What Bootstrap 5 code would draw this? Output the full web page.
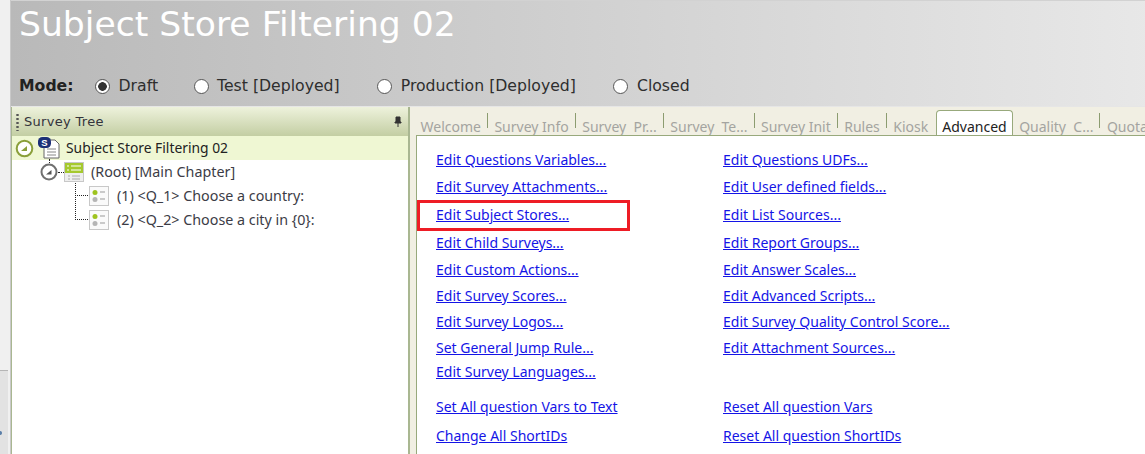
<!DOCTYPE html>
<html lang="en">
<head>
    <meta charset="UTF-8">
    <meta name="viewport" content="width=device-width, initial-scale=1.0">
    <title>Subject Store Filtering 02</title>
    <link rel="stylesheet" href="https://cdn.jsdelivr.net/npm/bootstrap@5.3.0/dist/css/bootstrap.min.css">
    <style>
        html, body { height: 100%; }
        body { width: 1145px; height: 454px; overflow: hidden; background: #f0f0f0; font-family: "Noto Sans", "Liberation Sans", sans-serif; color: #3c3c46; }
        .edge-strip { width: 10px; }
        .edge-low { height: 84px; background: radial-gradient(circle at 0 62px, #5b7fa8 1.5px, #e2e2e2 2.5px); border-top: 1px solid #b5b5b5; margin-right: 2px; }
        .app-shell { height: 454px; border-left: 1px solid #c9c9c9; }
        .head-band { height: 107px; background: linear-gradient(90deg, #b9b9b9, #e8e8e8); border-top: 1px solid #d2d2d2; border-bottom: 1px solid #e6e6e6; }
        .head-title { font-family: "DejaVu Sans", sans-serif; font-size: 34.6px; line-height: 46px; color: #fff; padding: 0 0 0 8px; margin: 0; font-weight: 400; }
        .mode-row { height: 30px; margin-top: 24px; padding-left: 8px; font-family: "DejaVu Sans", sans-serif; font-size: 15.7px; color: #2e2e2e; }
        .mode-label { font-weight: 700; width: 76px; color: #222; }
        .mode-opt { width: 15px; height: 15px; margin: 0 8.5px 0 0; border: 1px solid #555; background: #fff; flex: none; }
        .mode-opt:checked { background: radial-gradient(circle, #333 0 4px, #fff 4.6px); border-color: #555; }
        .mode-opt:focus { box-shadow: none; }
        .mode-text { margin-right: 37.5px; }
        .mode-first { margin-right: 35.5px; }
        .tree-pane { width: 399px; border-right: 2px solid #a9b791; border-left: 1px solid #a9b791; background: #fff; }
        .tree-head { height: 29px; background: linear-gradient(#eef2dc, #c3cea3); font-family: "DejaVu Sans", sans-serif; font-size: 13px; letter-spacing: .3px; color: #33333b; padding: 0 5px 0 4px; }
        .grip { width: 3px; height: 18px; margin-right: 5px; background: radial-gradient(circle, #555 1px, transparent 1.4px) 0 0 / 3px 4px; }
        .tree-row { height: 24px; font-size: 14.3px; white-space: nowrap; position: relative; }
        .tree-top { background: #eff7d3; color: #222; padding-left: 3px; font-size: 13.85px; }
        .tree-l1 { padding-left: 28px; }
        .tree-l1::before { content: ""; position: absolute; left: 37px; top: -1px; height: 4px; border-left: 1px dotted #222; }
        .tree-l2 { padding-left: 77px; }
        .tree-l2::before { content: ""; position: absolute; left: 63px; bottom: 12px; width: 13px; border-left: 1px dotted #222; border-bottom: 1px dotted #222; }
        .tree-q1::before { height: 13px; }
        .tree-q2::before { height: 37px; }
        .tree-l1 .hook { width: 6px; border-top: 1px dotted #222; flex: none; }
        .tree-lab { margin-left: 7px; }
        .tree-l2 .tree-lab { margin-left: 8px; }
        .tree-top .tree-lab { margin-left: 6px; }
        .side-pane { background: #f1efe3; }
        .tab-strip { height: 29px; border-bottom: 1px solid #98a97c; font-size: 14px; flex-wrap: nowrap; overflow: hidden; margin-left: 6px; align-items: flex-end; }
        .tab-item { height: 25px; padding: 8px 7px 0 6.5px; line-height: 18px; color: #a4a4a0; white-space: nowrap; position: relative; flex: none; }
        .tab-item:first-child { margin-left: -2px; }
        .tab-item::after { content: ""; position: absolute; right: 0; top: 3px; height: 15px; border-right: 1px solid #8c9c70; }
        .tab-active { background: #fff; color: #222; border: 1px solid #98a97c; border-bottom: 0; border-radius: 4px 4px 0 0; height: 26px; padding: 7px 5px 0; margin: 0 0 0 1px; position: relative; top: 1px; }
        .tab-plain::after, .tab-active::after { display: none; }
        .link-panel { position: relative; margin-left: 6px; background: #fff; border-left: 1px solid #98a97c; height: 320px; padding: 12px 0 0 19px; display: grid; grid-template-columns: 287px 1fr; grid-template-rows: 27px 28px 28px 27px 26px 26px 26px 24px 35px 29px 24px; font-size: 14px; }
        .link-panel a { color: #1414e6; white-space: nowrap; line-height: 24px; }
        .mark-box { position: absolute; left: 0; top: 64px; width: 213px; height: 31px; border: 3px solid #ee1c25; }
    </style>
</head>
<body class="d-flex">
    <div class="edge-strip d-flex flex-column justify-content-end flex-shrink-0"><div class="edge-low"></div></div>
    <div class="app-shell d-flex flex-column flex-grow-1">
        <!-- title band -->
        <header class="head-band flex-shrink-0">
            <h1 class="head-title">Subject Store Filtering 02</h1>
            <div class="mode-row d-flex align-items-center">
                <span class="mode-label">Mode:</span>
                <input class="form-check-input mode-opt" type="radio" name="mode" checked><span class="mode-first">Draft</span>
                <input class="form-check-input mode-opt" type="radio" name="mode"><span class="mode-text">Test [Deployed]</span>
                <input class="form-check-input mode-opt" type="radio" name="mode"><span class="mode-text">Production [Deployed]</span>
                <input class="form-check-input mode-opt" type="radio" name="mode"><span>Closed</span>
            </div>
        </header>

        <main class="d-flex flex-grow-1">
            <!-- survey tree -->
            <section class="tree-pane flex-shrink-0">
                <div class="tree-head d-flex align-items-center">
                    <span class="grip"></span>
                    <span class="flex-grow-1">Survey Tree</span>
                    <svg width="10" height="12" viewBox="0 0 10 12"><path d="M3 1h4v5h1v1H2V6h1zM5 7v4" fill="#333" stroke="#333"/></svg>
                </div>
                <div class="tree-row tree-top d-flex align-items-center">
                    <svg width="19" height="19" viewBox="0 0 19 19"><circle cx="9.5" cy="9.5" r="7.8" fill="#fff" stroke="#8a9f3a" stroke-width="2"/><path d="M6 12l6-5v5z" fill="#8a9f3a"/></svg>
                    <svg class="ms-1" width="22" height="22" viewBox="0 0 22 22"><path d="M6 3h11l4 4v14H6z" fill="#fff" stroke="#666"/><path d="M9 12h9M9 15h9M9 18h9" stroke="#888"/><rect x="0" y="0" width="13" height="11" rx="4.5" fill="#1c2f77"/><text x="6.5" y="9" font-size="9.5" font-weight="700" text-anchor="middle" fill="#fff" font-family="Liberation Sans">S</text></svg>
                    <span class="tree-lab">Subject Store Filtering 02</span>
                </div>
                <div class="tree-row tree-l1 d-flex align-items-center">
                    <svg width="18" height="18" viewBox="0 0 18 18"><circle cx="9" cy="9" r="7.5" fill="#fff" stroke="#707070" stroke-width="2"/><path d="M6 11.5l5.5-4.5v4.5z" fill="#555"/></svg>
                    <span class="hook"></span>
                    <svg width="20" height="20" viewBox="0 0 20 20"><rect x=".5" y=".5" width="19" height="19" fill="#eee" stroke="#c8c8c8"/><rect x="1" y="1" width="18" height="10" fill="#a5c92e"/><path d="M3 4h2M7 4h10M3 8h2M7 8h10" stroke="#fff" stroke-width="1.2"/><path d="M4 14h2M8 14h8M4 17h2M8 17h8" stroke="#aaa"/></svg>
                    <span class="tree-lab">(Root) [Main Chapter]</span>
                </div>
                <div class="tree-row tree-l2 tree-q1 d-flex align-items-center">
                    <svg width="20" height="20" viewBox="0 0 20 20"><rect x=".5" y=".5" width="19" height="19" fill="#fafafa" stroke="#c8c8c8"/><circle cx="6" cy="6.5" r="2.5" fill="#9ec31e"/><circle cx="6" cy="13.5" r="2.5" fill="#b5b5b5"/><path d="M11 6h5M11 13h5" stroke="#999"/></svg>
                    <span class="tree-lab">(1) &lt;Q_1&gt; Choose a country:</span>
                </div>
                <div class="tree-row tree-l2 tree-q2 d-flex align-items-center">
                    <svg width="20" height="20" viewBox="0 0 20 20"><rect x=".5" y=".5" width="19" height="19" fill="#fafafa" stroke="#c8c8c8"/><circle cx="6" cy="6.5" r="2.5" fill="#9ec31e"/><circle cx="6" cy="13.5" r="2.5" fill="#b5b5b5"/><path d="M11 6h5M11 13h5" stroke="#999"/></svg>
                    <span class="tree-lab">(2) &lt;Q_2&gt; Choose a city in {0}:</span>
                </div>
            </section>

            <!-- advanced tab -->
            <section class="side-pane flex-grow-1 overflow-hidden">
                <nav class="tab-strip d-flex">
                    <span class="tab-item">Welcome</span>
                    <span class="tab-item">Survey Info</span>
                    <span class="tab-item">Survey&nbsp; Pr...</span>
                    <span class="tab-item">Survey&nbsp; Te...</span>
                    <span class="tab-item">Survey Init</span>
                    <span class="tab-item">Rules</span>
                    <span class="tab-item tab-plain">Kiosk</span>
                    <span class="tab-item tab-active">Advanced</span>
                    <span class="tab-item">Quality&nbsp; C...</span>
                    <span class="tab-item tab-plain">Quota</span>
                </nav>
                <div class="link-panel">
                    <a href="#">Edit Questions Variables...</a><a href="#">Edit Questions UDFs...</a>
                    <a href="#">Edit Survey Attachments...</a><a href="#">Edit User defined fields...</a>
                    <a href="#">Edit Subject Stores...</a><a href="#">Edit List Sources...</a>
                    <a href="#">Edit Child Surveys...</a><a href="#">Edit Report Groups...</a>
                    <a href="#">Edit Custom Actions...</a><a href="#">Edit Answer Scales...</a>
                    <a href="#">Edit Survey Scores...</a><a href="#">Edit Advanced Scripts...</a>
                    <a href="#">Edit Survey Logos...</a><a href="#">Edit Survey Quality Control Score...</a>
                    <a href="#">Set General Jump Rule...</a><a href="#">Edit Attachment Sources...</a>
                    <a href="#">Edit Survey Languages...</a><span></span>
                    <a href="#">Set All question Vars to Text</a><a href="#">Reset All question Vars</a>
                    <a href="#">Change All ShortIDs</a><a href="#">Reset All question ShortIDs</a>
                    <span class="mark-box"></span>
                </div>
            </section>
        </main>
    </div>
    <script src="https://cdn.jsdelivr.net/npm/bootstrap@5.3.0/dist/js/bootstrap.bundle.min.js"></script>
</body>
</html>
